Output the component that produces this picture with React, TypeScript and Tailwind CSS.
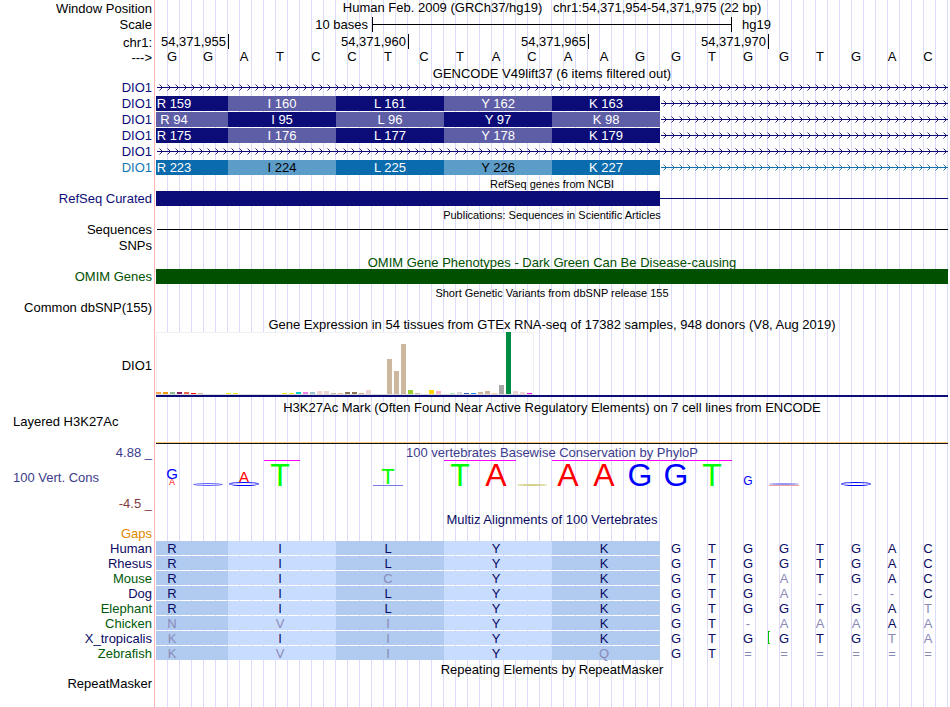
import { useId } from 'react'
import type { ReactNode } from 'react'
import clsx from 'clsx'

const SEQUENCE = 'GGATCCTCTACAAGGTGGTGAC'
const RULER = ['54,371,955', '54,371,960', '54,371,965', '54,371,970']

// 54 tissues: [colour, height in px]
const TISSUES: [string, number][] = [
  ['#ffa54f', 2], ['#ee9a00', 2], ['#8fbc8f', 2], ['#8b1c62', 2], ['#ee6a50', 2], ['#ff0000', 1],
  ['#cdb79e', 1], ['#eeee00', 0], ['#eeee00', 0], ['#eeee00', 0], ['#eeee00', 1], ['#eeee00', 1],
  ['#eeee00', 0], ['#eeee00', 0], ['#eeee00', 0], ['#eeee00', 0], ['#eeee00', 0], ['#eeee00', 0],
  ['#eeee00', 1], ['#eeee00', 1], ['#00cdcd', 2], ['#ee82ee', 2], ['#9ac0cd', 2], ['#eed5d2', 3],
  ['#eed5d2', 3], ['#cdb79e', 1], ['#eec591', 1], ['#8b7355', 2], ['#8b7355', 2], ['#cdaa7d', 1],
  ['#eed5d2', 4], ['#b452cd', 0], ['#7a378b', 0], ['#cdb79e', 35], ['#cdb79e', 23], ['#cdb79e', 50],
  ['#9acd32', 4], ['#cdb79e', 1], ['#7a67ee', 0], ['#ffd700', 4], ['#ffb6c1', 3], ['#cd9b1d', 0],
  ['#b4eeb4', 1], ['#d9d9d9', 2], ['#3a5fcd', 1], ['#1e90ff', 1], ['#cdb79e', 2], ['#cdb79e', 3],
  ['#ffd39b', 1], ['#a6a6a6', 9], ['#008b45', 62], ['#eed5d2', 3], ['#eed5d2', 2], ['#ff00ff', 1],
]

interface Species {
  name: string
  green?: boolean
  aminos: string
  bases: string
  // characters that differ from human, by position
  faded: string
  insertAt?: number
}

const SPECIES: Species[] = [
  { name: 'Human', aminos: 'RILYK', bases: 'GTGGTGAC', faded: '.............' },
  { name: 'Rhesus', aminos: 'RILYK', bases: 'GTGGTGAC', faded: '.............' },
  { name: 'Mouse', green: true, aminos: 'RICYK', bases: 'GTGATGAC', faded: '..x.....x....' },
  { name: 'Dog', aminos: 'RILYK', bases: 'GTGA---C', faded: '........xxxx.' },
  { name: 'Elephant', green: true, aminos: 'RILYK', bases: 'GTGGTGAT', faded: '............x' },
  { name: 'Chicken', green: true, aminos: 'NVIYK', bases: 'GT-AAAAA', faded: 'xxx....xxxx.x' },
  { name: 'X_tropicalis', aminos: 'KIIYK', bases: 'GTGGTGTA', faded: 'x.x........xx', insertAt: 3 },
  { name: 'Zebrafish', green: true, aminos: 'KVIYQ', bases: 'GT======', faded: 'xxx.x..xxxxxx' },
]

interface RowProps {
  label?: ReactNode
  height: string
  labelClass?: string
  children?: ReactNode
}

function Row({ label, height, labelClass, children }: RowProps) {
  return (
    <div className={clsx('flex', height)}>
      <div className={clsx('w-[154px] shrink-0 whitespace-nowrap pr-[2px] text-right', labelClass)}>{label}</div>
      <div className="min-w-0 flex-1 border-l border-[#ffb4b4] bg-[linear-gradient(to_left,#dcdcfa_1px,transparent_1px)] bg-[length:calc(100%/66)_100%] bg-clip-content bg-origin-content pl-px pr-[2px]">
        {children}
      </div>
    </div>
  )
}

function Title({ small, className, children }: { small?: boolean; className?: string; children: ReactNode }) {
  return (
    <h2 className={clsx('whitespace-pre text-center', small ? 'text-[11px]' : 'text-[13px]', className)}>
      {children}
    </h2>
  )
}

// Thin line with strand arrows every 8px
function Intron({ color }: { color: string }) {
  const id = useId()
  return (
    <svg className="block h-[15px] w-full" fill="none" stroke={color}>
      <defs>
        <pattern id={id} width="8" height="15" patternUnits="userSpaceOnUse">
          <path d="M3.5 4.5L6.5 7.5L3.5 10.5" strokeWidth="0.9" />
        </pattern>
      </defs>
      <rect width="100%" height="15" fill={`url(#${id})`} stroke="none" />
      <path d="M1 7.5H4000" />
    </svg>
  )
}

interface CodonTheme {
  dark: string
  light: string
  line: string
}

const NAVY: CodonTheme = { dark: 'bg-[#0c0c78] text-white', light: 'bg-[#5e5ea6] text-white', line: '#0c0c78' }
const TEAL: CodonTheme = { dark: 'bg-[#0a6cac] text-white', light: 'bg-[#5c9cc8] text-black', line: '#1470aa' }

function CodonRow({ codons, theme, lightFirst }: { codons: string[]; theme: CodonTheme; lightFirst?: boolean }) {
  return (
    <div className="grid grid-cols-22 leading-[15px]">
      {codons.map((codon, i) => (
        <div
          key={codon}
          className={clsx(
            'h-[15px] whitespace-nowrap',
            i === 0 ? 'col-span-2' : 'col-span-3',
            (i % 2 === 1) !== Boolean(lightFirst) ? theme.light : theme.dark,
          )}
        >
          <div className={clsx('text-center', i === 0 && 'w-1/2')}>{codon}</div>
        </div>
      ))}
      <div className="col-span-8">
        <Intron color={theme.line} />
      </div>
    </div>
  )
}

function ExpressionChart() {
  return (
    <div className="border-b-2 border-[#0c0c78]">
      <div className="flex h-[63px] w-[378px] items-end gap-[2px] border-b border-[#dcdcdc] bg-white shadow-[inset_0_1px_#f0f0f0,inset_1px_0_#f0f0f0,inset_-1px_0_#f0f0f0]">
        {TISSUES.map(([color, height], i) => (
          <div key={i} className="w-[5px]" style={{ backgroundColor: color, height }} />
        ))}
      </div>
    </div>
  )
}

const LOGO_SIZE: Record<string, string> = {
  xl: 'text-[32px] leading-[22px]',
  lg: 'text-[22px] leading-[16px]',
  md: 'text-[15px] leading-[11px]',
  sm: 'text-[12px] leading-[9px]',
  xs: 'text-[9px] leading-[7px]',
}

const LOGO_COLOR: Record<string, string> = {
  A: 'text-[#ff0000]',
  G: 'text-[#0000ff]',
  T: 'text-[#00ff00]',
}

function Base({ letter, size }: { letter: string; size: string }) {
  return <span className={clsx(LOGO_SIZE[size], LOGO_COLOR[letter])}>{letter}</span>
}

// Scores too low to read as a letter
function Sliver({ className }: { className: string }) {
  return <span className={clsx('w-[30px]', className)} />
}

const LOGO: Record<number, ReactNode> = {
  0: <><Base letter="G" size="md" /><Base letter="A" size="xs" /></>,
  1: <Sliver className="h-[3px] rounded-[50%] border border-[#5a5aff]" />,
  2: <><Base letter="A" size="md" /><Sliver className="h-[4px] rounded-[50%] border border-[#0000ff]" /></>,
  3: <Base letter="T" size="xl" />,
  6: <><Base letter="T" size="lg" /><Sliver className="h-px bg-[#7878e6]" /></>,
  8: <Base letter="T" size="xl" />,
  9: <Base letter="A" size="xl" />,
  10: <Sliver className="h-[2px] rounded-[50%] bg-[#d2d28c]" />,
  11: <Base letter="A" size="xl" />,
  12: <Base letter="A" size="xl" />,
  13: <Base letter="G" size="xl" />,
  14: <Base letter="G" size="xl" />,
  15: <Base letter="T" size="xl" />,
  16: <Base letter="G" size="sm" />,
  17: <><Sliver className="h-[2px] rounded-[50%] bg-[#9696f0]" /><Sliver className="h-px bg-[#f0a0a0]" /></>,
  19: <Sliver className="h-[4px] rounded-[50%] border border-[#0000ff]" />,
}

const CLIPPED = [3, 8, 9, 11, 12, 13, 14, 15]

function ConservationLogo() {
  return (
    <div className="grid grid-cols-22">
      {SEQUENCE.split('').map((_, i) => (
        <div
          key={i}
          className={clsx(
            'flex h-[26px] flex-col items-center justify-end border-t pr-1',
            CLIPPED.includes(i) ? 'border-[#ff00ff]' : 'border-transparent',
          )}
        >
          {LOGO[i]}
        </div>
      ))}
    </div>
  )
}

function AlignmentRow({ species }: { species: Species }) {
  const tone = (i: number) => (species.faded[i] === 'x' ? 'text-[#8a8ab8]' : 'text-[#0a0a64]')
  return (
    <div className="grid grid-cols-22 text-center leading-[15px]">
      {species.aminos.split('').map((amino, i) => (
        <div
          key={i}
          className={clsx(
            'h-[14px]',
            i === 0 ? 'col-span-2' : 'col-span-3 pr-1',
            i % 2 === 0 ? 'bg-[#b0caf0]' : 'bg-[#c8dcff]',
            tone(i),
          )}
        >
          <div className={clsx(i === 0 && 'w-1/2 pr-1')}>{amino}</div>
        </div>
      ))}
      {species.bases.split('').map((base, i) => (
        <div key={i} className={clsx('relative h-[15px] pr-1', tone(i + 5))}>
          {species.insertAt === i && (
            <span className="absolute top-0 left-0 h-[13px] w-[2px] border-y border-l border-[#00c800]" />
          )}
          {base}
        </div>
      ))}
    </div>
  )
}

export default function App() {
  return (
    <main className="overflow-hidden bg-white font-['Liberation_Sans',Arial,sans-serif] text-[13px] text-black">
      {/* Position, scale and ruler */}
      <Row label="Window Position" height="h-[16px]" labelClass="leading-[17px]">
        <Title className="leading-[16px]">{'Human Feb. 2009 (GRCh37/hg19)   chr1:54,371,954-54,371,975 (22 bp)'}</Title>
      </Row>
      <Row label="Scale" height="h-[17px]" labelClass="leading-[18px]">
        <div className="grid grid-cols-22 leading-[17px]">
          <div className="col-span-6 pr-1 text-right">10 bases</div>
          <div className="col-span-10 my-px flex items-center border-x border-black">
            <div className="h-px w-full bg-black" />
          </div>
          <div className="col-span-6 pl-[10px]">hg19</div>
        </div>
      </Row>
      <Row label="chr1:" height="h-[17px]" labelClass="leading-[19px]">
        <div className="grid grid-cols-22 pt-px text-right leading-[16px]">
          {RULER.map((position, i) => (
            <div
              key={position}
              className={clsx('h-[15px] pr-[2px]', i === 0 ? 'col-span-2' : 'col-span-5 border-l border-black')}
            >
              {position}
            </div>
          ))}
          <div className="col-span-5 h-[15px] border-l border-black" />
        </div>
      </Row>
      <Row label="--->" height="h-[16px]" labelClass="leading-[16px]">
        <div className="grid grid-cols-22 text-center leading-[14px]">
          {SEQUENCE.split('').map((base, i) => (
            <div key={i} className="pr-1">{base}</div>
          ))}
        </div>
      </Row>

      {/* GENCODE */}
      <Row height="h-[14px]">
        <Title className="leading-[15px]">GENCODE V49lift37 (6 items filtered out)</Title>
      </Row>
      <Row label="DIO1" height="h-[16px]" labelClass="leading-[16px] text-[#0c0c78]">
        <Intron color="#0c0c78" />
      </Row>
      <Row label="DIO1" height="h-[16px]" labelClass="leading-[16px] text-[#0c0c78]">
        <CodonRow codons={['R 159', 'I 160', 'L 161', 'Y 162', 'K 163']} theme={NAVY} />
      </Row>
      <Row label="DIO1" height="h-[16px]" labelClass="leading-[16px] text-[#0c0c78]">
        <CodonRow codons={['R 94', 'I 95', 'L 96', 'Y 97', 'K 98']} theme={NAVY} lightFirst />
      </Row>
      <Row label="DIO1" height="h-[16px]" labelClass="leading-[16px] text-[#0c0c78]">
        <CodonRow codons={['R 175', 'I 176', 'L 177', 'Y 178', 'K 179']} theme={NAVY} />
      </Row>
      <Row label="DIO1" height="h-[16px]" labelClass="leading-[16px] text-[#0c0c78]">
        <Intron color="#0c0c78" />
      </Row>
      <Row label="DIO1" height="h-[16px]" labelClass="leading-[16px] text-[#1478b4]">
        <CodonRow codons={['R 223', 'I 224', 'L 225', 'Y 226', 'K 227']} theme={TEAL} />
      </Row>

      {/* RefSeq and publications */}
      <Row height="h-[15px]">
        <Title small className="leading-[16px]">RefSeq genes from NCBI</Title>
      </Row>
      <Row label="RefSeq Curated" height="h-[16px]" labelClass="leading-[16px] text-[#0c0c78]">
        <div className="grid grid-cols-22 items-center">
          <div className="col-span-14 h-[15px] bg-[#0c0c78]" />
          <div className="col-span-8 h-px bg-[#0c0c78]" />
        </div>
      </Row>
      <Row height="h-[15px]">
        <Title small className="leading-[16px]">Publications: Sequences in Scientific Articles</Title>
      </Row>
      <Row label="Sequences" height="h-[16px]" labelClass="leading-[16px]">
        <div className="flex h-[15px] items-center pl-px">
          <div className="h-px w-full bg-black" />
        </div>
      </Row>
      <Row label="SNPs" height="h-[16px]" labelClass="leading-[16px]" />

      {/* OMIM and dbSNP */}
      <Row height="h-[15px]">
        <Title className="leading-[18px] text-[#005000]">OMIM Gene Phenotypes - Dark Green Can Be Disease-causing</Title>
      </Row>
      <Row label="OMIM Genes" height="h-[16px]" labelClass="leading-[16px] text-[#005000]">
        <div className="h-[15px] bg-[#005000]" />
      </Row>
      <Row height="h-[15px]">
        <Title small className="leading-[16px]">Short Genetic Variants from dbSNP release 155</Title>
      </Row>
      <Row label="Common dbSNP(155)" height="h-[16px]" labelClass="leading-[16px]" />

      {/* GTEx */}
      <Row height="h-[16px]">
        <Title className="leading-[17px]">
          Gene Expression in 54 tissues from GTEx RNA-seq of 17382 samples, 948 donors (V8, Aug 2019)
        </Title>
      </Row>
      <Row label="DIO1" height="h-[65px]" labelClass="leading-[67px]">
        <ExpressionChart />
      </Row>

      {/* H3K27Ac */}
      <Row height="h-[18px]">
        <Title className="leading-[21px]">
          H3K27Ac Mark (Often Found Near Active Regulatory Elements) on 7 cell lines from ENCODE
        </Title>
      </Row>
      <Row
        label={<div className="pl-[13px] text-left">Layered H3K27Ac</div>}
        height="h-[29px]"
        labelClass="leading-[13px]"
      >
        <div className="flex h-full flex-col justify-end">
          <div className="h-px bg-[#ffc878]" />
          <div className="h-px bg-[#14141e]" />
        </div>
      </Row>

      {/* Conservation */}
      <Row label="4.88 _" height="h-[16px]" labelClass="leading-[17px] text-[#3c3c8c]">
        <Title className="leading-[18px] text-[#3c3c8c]">100 vertebrates Basewise Conservation by PhyloP</Title>
      </Row>
      <Row
        label={
          <div className="flex h-full flex-col justify-between">
            <div className="pl-[13px] text-left leading-[36px] text-[#3c3c8c]">100 Vert. Cons</div>
            <div className="pb-[3px] leading-[16px] text-[#823c3c]">-4.5 _</div>
          </div>
        }
        height="h-[52px]"
      >
        <ConservationLogo />
      </Row>

      {/* Multiz */}
      <Row height="h-[14px]">
        <Title className="leading-[15px] text-[#0a0a64]">Multiz Alignments of 100 Vertebrates</Title>
      </Row>
      <Row label="Gaps" height="h-[15px]" labelClass="leading-[15px] text-[#e18700]" />
      {SPECIES.map(species => (
        <Row
          key={species.name}
          label={species.name}
          height="h-[15px]"
          labelClass={clsx('leading-[15px]', species.green ? 'text-[#005a0a]' : 'text-[#0a0a64]')}
        >
          <AlignmentRow species={species} />
        </Row>
      ))}

      {/* RepeatMasker */}
      <Row height="h-[16px]">
        <Title className="leading-[17px]">Repeating Elements by RepeatMasker</Title>
      </Row>
      <Row label="RepeatMasker" height="h-[30px]" labelClass="leading-[14px]" />
    </main>
  )
}
